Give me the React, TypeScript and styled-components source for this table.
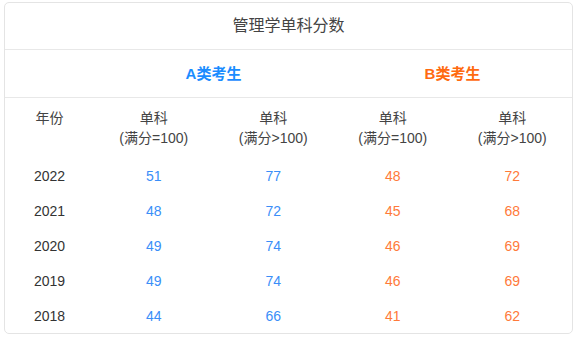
import styled, { createGlobalStyle } from "styled-components";

const GlobalStyle = createGlobalStyle`
  body {
    margin: 0;
    background: #fff;
    font-family: "Liberation Sans", "Noto Sans CJK SC", Arial, sans-serif;
  }
`;

type Row = { year: number; a1: number; a2: number; b1: number; b2: number };

const rows: Row[] = [
  { year: 2022, a1: 51, a2: 77, b1: 48, b2: 72 },
  { year: 2021, a1: 48, a2: 72, b1: 45, b2: 68 },
  { year: 2020, a1: 49, a2: 74, b1: 46, b2: 69 },
  { year: 2019, a1: 49, a2: 74, b1: 46, b2: 69 },
  { year: 2018, a1: 44, a2: 66, b1: 41, b2: 62 },
];

const BLUE = "#3a8ef8";
const ORANGE = "#ff7a3a";

export default function App() {
  return (
    <Page>
      <GlobalStyle />
      <Card>
        <Title>管理学单科分数</Title>
        <GroupRow>
          <span />
          <Group $color="#1a8cff">A类考生</Group>
          <Group $color="#ff6a10">B类考生</Group>
        </GroupRow>
        <HeadRow>
          <HeadCell>年份</HeadCell>
          <HeadCell>单科<br />(满分=100)</HeadCell>
          <HeadCell>单科<br />(满分&gt;100)</HeadCell>
          <HeadCell>单科<br />(满分=100)</HeadCell>
          <HeadCell>单科<br />(满分&gt;100)</HeadCell>
        </HeadRow>
        {rows.map((r) => (
          <DataRow key={r.year}>
            <Cell>{r.year}</Cell>
            <Cell $color={BLUE}>{r.a1}</Cell>
            <Cell $color={BLUE}>{r.a2}</Cell>
            <Cell $color={ORANGE}>{r.b1}</Cell>
            <Cell $color={ORANGE}>{r.b2}</Cell>
          </DataRow>
        ))}
      </Card>
    </Page>
  );
}

const Page = styled.div`
  padding: 2px 4px 0 4px;
`;

const Card = styled.div`
  box-sizing: border-box;
  width: 569px;
  border: 1px solid #e4e4e4;
  border-radius: 5px;
  background: #fff;
`;

const Title = styled.div`
  box-sizing: border-box;
  height: 47px;
  padding-bottom: 4px;
  display: flex;
  align-items: center;
  justify-content: center;
  font-size: 16px;
  color: #444;
  border-bottom: 1px solid #e8e8e8;
`;

const grid = `
  display: grid;
  grid-template-columns: 89px 1fr 1fr 1fr 1fr;
`;

const GroupRow = styled.div`
  box-sizing: border-box;
  display: grid;
  grid-template-columns: 89px 2fr 2fr;
  height: 48px;
  padding-bottom: 3px;
  align-items: center;
  border-bottom: 1px solid #e8e8e8;
`;

const Group = styled.div<{ $color: string }>`
  text-align: center;
  font-size: 15px;
  font-weight: bold;
  color: ${(p) => p.$color};
`;

const HeadRow = styled.div`
  ${grid}
  padding: 10px 0 10px;
`;

const HeadCell = styled.div`
  text-align: center;
  font-size: 14px;
  line-height: 20px;
  color: #444;
`;

const DataRow = styled.div`
  ${grid}
  height: 35px;
  align-items: center;
`;

const Cell = styled.div<{ $color?: string }>`
  text-align: center;
  font-size: 14px;
  color: ${(p) => p.$color ?? "#333"};
`;
